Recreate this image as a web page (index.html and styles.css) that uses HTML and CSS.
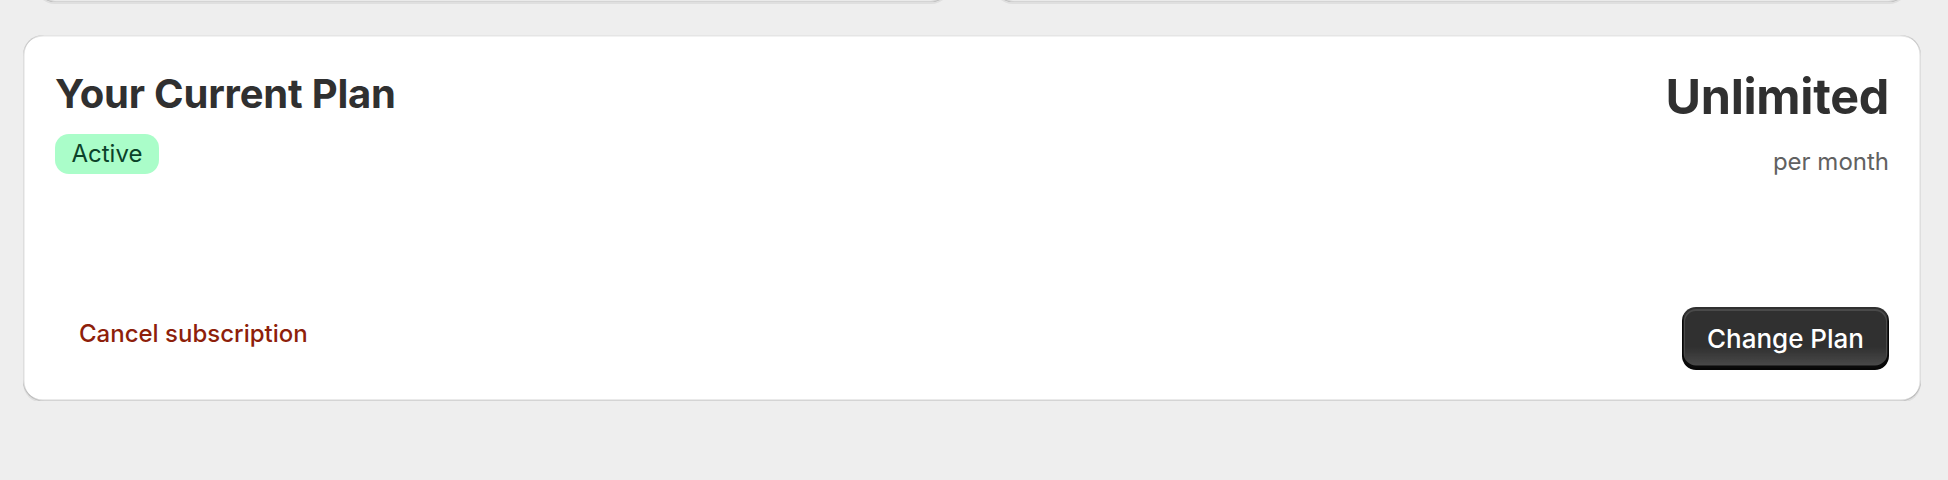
FILE: index.html
```html
<!DOCTYPE html>
<html lang="en">
<head>
<meta charset="utf-8">
<title>Plan</title>
<link rel="stylesheet" href="styles.css">
</head>
<body>
<div class="page">
  <div class="top-row">
    <div class="card stub"></div>
    <div class="card stub"></div>
  </div>
  <section class="card plan">
    <div class="plan-head">
      <div class="plan-left">
        <h2 class="plan-title">Your Current Plan</h2>
        <span class="badge">Active</span>
      </div>
      <div class="plan-right">
        <div class="plan-price">Unlimited</div>
        <div class="plan-period">per month</div>
      </div>
    </div>
    <div class="plan-foot">
      <button class="btn-plain">Cancel subscription</button>
      <button class="btn-primary">Change Plan</button>
    </div>
  </section>
</div>
</body>
</html>
```

FILE: styles.css
```css
* { box-sizing: border-box; }
html, body {
  margin: 0;
  padding: 0;
  background: #eeeeee;
  font-family: Inter, "Noto Sans", sans-serif;
  color: #303030;
}
.page {
  padding: 0 27px 0 23px;
}
.card {
  background: #ffffff;
  border-radius: 20px;
  box-shadow:
    inset 1.5px 0 0 rgba(0,0,0,0.13),
    inset -1.5px 0 0 rgba(0,0,0,0.13),
    inset 0 -1.5px 0 rgba(0,0,0,0.17),
    inset 0 1.5px 0 rgba(204,204,204,0.5),
    0 2px 0 rgba(26,26,26,0.07);
}
.top-row {
  display: grid;
  grid-template-columns: 1fr 1fr;
  gap: 42px;
  padding: 0 12px;
  margin-top: -198px;
}
.stub {
  height: 200px;
}
.plan {
  margin-top: 33px;
  height: 366px;
  padding: 32px 32px 31px 32px;
  display: flex;
  flex-direction: column;
}
.plan-head {
  display: flex;
  justify-content: space-between;
  align-items: flex-start;
}
.plan-left {
  display: flex;
  flex-direction: column;
  align-items: flex-start;
}
.plan-title {
  margin: 0;
  font-size: 40px;
  line-height: 53px;
  font-weight: 700;
  letter-spacing: -0.2px;
}
.badge {
  margin-top: 14px;
  height: 40px;
  line-height: 40px;
  padding: 0 16.5px;
  border-radius: 14px;
  background: #aafdc9;
  color: #0b4229;
  font-size: 24px;
  font-weight: 400;
}
.plan-right {
  display: flex;
  flex-direction: column;
  align-items: flex-end;
}
.plan-price {
  font-size: 48.5px;
  line-height: 60px;
  font-weight: 700;
  letter-spacing: -0.3px;
}
.plan-period {
  margin-top: 19px;
  font-size: 24px;
  line-height: 32px;
  color: #616161;
}
.plan-foot {
  margin-top: auto;
  display: flex;
  justify-content: space-between;
  align-items: flex-start;
}
.btn-plain {
  border: 0;
  background: transparent;
  font-family: inherit;
  font-size: 24px;
  font-weight: 500;
  line-height: 31px;
  padding: 11px 24px 13px;
  color: #8e1f0b;
  border-radius: 14px;
}
.btn-primary {
  border: 0;
  font-family: inherit;
  font-size: 26px;
  font-weight: 500;
  line-height: 32px;
  padding: 15.5px 25px;
  color: #ffffff;
  border-radius: 14px;
  background: linear-gradient(180deg, rgba(48,48,48,0) 63%, rgba(255,255,255,0.15) 100%), #303030;
  box-shadow:
    inset 0 -3px 0 1.5px rgba(0,0,0,0.85),
    inset 0 0 0 2px #303030,
    inset 0 1px 0 3px #4a4a4a;
}
```
